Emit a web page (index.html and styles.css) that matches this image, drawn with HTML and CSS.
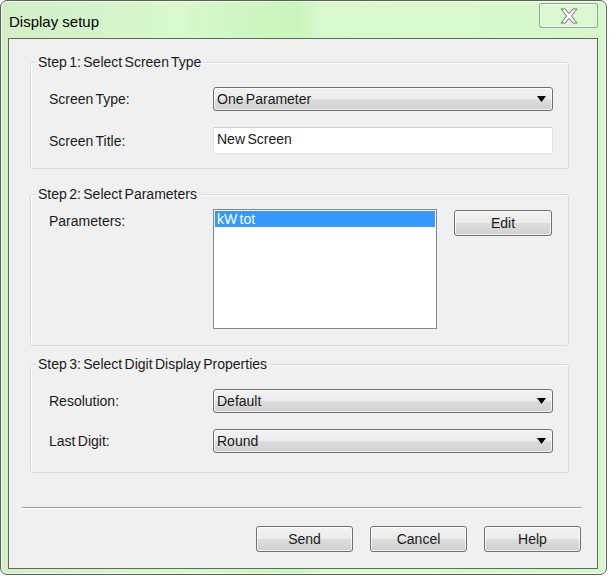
FILE: index.html
```html
<!DOCTYPE html>
<html lang="en">
<head>
  <meta charset="UTF-8">
  <title>Display setup</title>
  <link rel="stylesheet" href="styles.css">
</head>
<body>
  <div class="window">
    <div class="titlebar">
      <div class="title">Display setup</div>
      <div class="close-btn">
        <svg width="20" height="16" viewBox="0 0 20 16">
          <polygon points="2,1 6,1 10,5.5 14,1 18,1 12.5,8 18,15 14,15 10,10.5 6,15 2,15 7.5,8" fill="#fdfdfd" stroke="#6a6a6a" stroke-width="1" stroke-linejoin="round"/>
        </svg>
      </div>
    </div>
    <div class="client">
      <fieldset class="group group-one">
        <legend>Step 1: Select Screen Type</legend>
        <div class="row">
          <div class="label">Screen Type:</div>
          <div class="combo">
            <span>One Parameter</span>
            <svg class="arrow" width="9" height="6" viewBox="0 0 9 6"><polygon points="0,0 9,0 4.5,6" fill="#000"/></svg>
          </div>
        </div>
        <div class="row">
          <div class="label">Screen Title:</div>
          <div class="textbox">New Screen</div>
        </div>
      </fieldset>

      <fieldset class="group group-two">
        <legend>Step 2: Select Parameters</legend>
        <div class="row row-top">
          <div class="label label-top">Parameters:</div>
          <div class="listbox">
            <div class="list-item selected">kW tot</div>
          </div>
          <button class="btn edit-btn">Edit</button>
        </div>
      </fieldset>

      <fieldset class="group group-three">
        <legend>Step 3: Select Digit Display Properties</legend>
        <div class="row">
          <div class="label">Resolution:</div>
          <div class="combo">
            <span>Default</span>
            <svg class="arrow" width="9" height="6" viewBox="0 0 9 6"><polygon points="0,0 9,0 4.5,6" fill="#000"/></svg>
          </div>
        </div>
        <div class="row">
          <div class="label">Last Digit:</div>
          <div class="combo">
            <span>Round</span>
            <svg class="arrow" width="9" height="6" viewBox="0 0 9 6"><polygon points="0,0 9,0 4.5,6" fill="#000"/></svg>
          </div>
        </div>
      </fieldset>

      <div class="separator"></div>

      <div class="footer">
        <button class="btn">Send</button>
        <button class="btn">Cancel</button>
        <button class="btn">Help</button>
      </div>
    </div>
  </div>
</body>
</html>
```

FILE: styles.css
```css
body {
  margin: 0;
  background: #ffffff;
  font-family: "Liberation Sans", Arial, sans-serif;
}
.window {
  width: 607px;
  height: 575px;
  box-sizing: border-box;
  border: 1px solid #5b6359;
  border-radius: 7px;
  padding: 0 8px 5px 7px;
  background: linear-gradient(to right, #d2efc8 0%, #d8f8cd 30%, #c9f5bb 49%, #d9f9cf 53%, #d6f6cc 100%);
  box-shadow: inset 0 0 0 1px rgba(255, 255, 255, 0.6);
  display: flex;
  flex-direction: column;
}
.titlebar {
  height: 37px;
  display: flex;
  justify-content: space-between;
  align-items: flex-start;
}
.title {
  margin: 12px 0 0 1px;
  font-size: 15px;
  line-height: 18px;
  color: #000;
}
.close-btn {
  margin-top: 2px;
  width: 57px;
  height: 23px;
  border: 1px solid rgba(60, 70, 60, 0.45);
  border-radius: 3px;
  background: rgba(255, 255, 255, 0.12);
  box-shadow: inset 0 0 0 1px rgba(255, 255, 255, 0.5);
  display: flex;
  align-items: center;
  justify-content: center;
}
.client {
  flex: 1;
  border: 1px solid #5f6a5f;
  background: #f0f0f0;
  padding: 15px 0 16px 0;
  display: flex;
  flex-direction: column;
  font-size: 14px;
  word-spacing: -1.5px;
  color: #1a1a1a;
}
.group {
  margin: 0 28px 0 21px;
  padding: 0 15px 0 18px;
  border: 1px solid #d8dcdf;
  border-radius: 3px;
  box-shadow: inset 1px 1px 0 #ffffff;
  min-inline-size: 0;
}
.group legend {
  margin-left: -13px;
  padding: 0 2px;
  line-height: 16px;
}
.group-one {
  padding-top: 17px;
  padding-bottom: 14px;
}
.group-two {
  margin-top: 17px;
  padding-top: 7px;
  padding-bottom: 16px;
}
.group-three {
  margin-top: 10px;
  padding-top: 17px;
  padding-bottom: 19px;
}
.row {
  display: flex;
  align-items: center;
}
.row + .row {
  margin-top: 16px;
}
.row-top {
  align-items: flex-start;
}
.label {
  width: 164px;
  flex-shrink: 0;
  line-height: 16px;
}
.label-top {
  margin-top: 4px;
}
.combo {
  width: 340px;
  height: 24px;
  box-sizing: border-box;
  border: 1px solid #707070;
  border-radius: 3px;
  background: linear-gradient(to bottom, #f2f2f2 0%, #ebebeb 50%, #dddddd 51%, #cfcfcf 100%);
  box-shadow: inset 0 0 0 1px rgba(255, 255, 255, 0.7);
  display: flex;
  align-items: center;
  justify-content: space-between;
  padding: 0 6px 0 3px;
}
.combo span {
  line-height: 16px;
}
.arrow {
  display: block;
}
.textbox {
  width: 340px;
  height: 27px;
  box-sizing: border-box;
  border: 1px solid #e2e3ea;
  border-top-color: #d0d2d8;
  background: #ffffff;
  padding: 3px 3px 0;
  line-height: 16px;
}
.listbox {
  width: 224px;
  height: 120px;
  box-sizing: border-box;
  border: 1px solid #828790;
  background: #ffffff;
  padding: 1px;
}
.list-item {
  height: 16px;
  line-height: 16px;
  padding-left: 2px;
}
.list-item.selected {
  background: #3399ff;
  color: #ffffff;
}
.btn {
  height: 26px;
  box-sizing: border-box;
  border: 1px solid #707070;
  border-radius: 3px;
  background: linear-gradient(to bottom, #f2f2f2 0%, #ebebeb 50%, #dddddd 51%, #cfcfcf 100%);
  box-shadow: inset 0 0 0 1px rgba(255, 255, 255, 0.7);
  font-family: "Liberation Sans", Arial, sans-serif;
  font-size: 14px;
  color: #1a1a1a;
  padding: 0;
  cursor: pointer;
}
.edit-btn {
  width: 98px;
  margin: 1px 0 0 17px;
}
.separator {
  margin: 34px 15px 0 13px;
  height: 1px;
  background: #a0a0a0;
  box-shadow: 0 1px 0 #ffffff;
}
.footer {
  margin-top: 18px;
  display: flex;
  justify-content: flex-end;
  gap: 17px;
  padding-right: 16px;
}
.footer .btn {
  width: 97px;
}
```
